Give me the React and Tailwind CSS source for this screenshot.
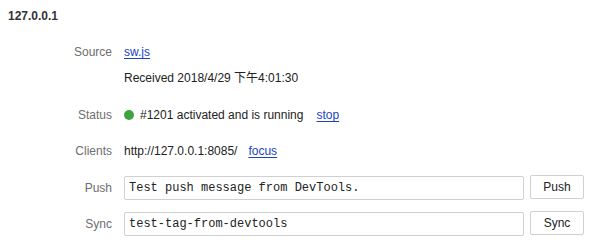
import React from 'react';

const Row = ({ label, children, className = '' }) => (
  <div className={`flex items-center ${className}`}>
    <div className="w-[112px] shrink-0 text-right text-[#6e6e6e]">{label}</div>
    <div className="ml-3 flex items-center">{children}</div>
  </div>
);

const Link = ({ children }) => (
  <a href="#" className="text-[#1a44c2] underline underline-offset-2">{children}</a>
);

const ActionRow = ({ label, value, button, className = '' }) => (
  <Row label={label} className={className}>
    <input
      readOnly
      value={value}
      className="h-[24px] w-[400px] rounded-[2px] border border-[#d0d0d0] bg-white px-[4px] font-['Liberation_Mono',Menlo,monospace] text-[12px] text-[#222] outline-none"
    />
    <button className="ml-[6px] -mt-[2px] h-[24px] w-[54px] rounded-[2px] border border-[#d0d0d0] bg-white text-[12px] text-[#222]">
      {button}
    </button>
  </Row>
);

export default function App() {
  return (
    <div className="h-[242px] w-[601px] bg-white font-['Liberation_Sans','Noto_Sans_CJK_SC',Arial,sans-serif] text-[12px] leading-[16px] text-[#222]">
      <div className="px-[8px] pt-[8px] text-[12px] font-bold leading-[16px] text-[#333]">127.0.0.1</div>

      <Row label="Source" className="mt-[20px]">
        <Link>sw.js</Link>
      </Row>
      <Row label="" className="mt-[10px]">
        <span>Received 2018/4/29 下午4:01:30</span>
      </Row>

      <Row label="Status" className="mt-[21px]">
        <span className="mr-[6px] inline-block h-[10px] w-[10px] rounded-full bg-[#3fa33f]" />
        <span>#1201 activated and is running</span>
        <span className="ml-[13px]"><Link>stop</Link></span>
      </Row>

      <Row label="Clients" className="mt-[20px]">
        <span>http://127.0.0.1:8085/</span>
        <span className="ml-[11px]"><Link>focus</Link></span>
      </Row>

      <ActionRow label="Push" value="Test push message from DevTools." button="Push" className="mt-[17px]" />
      <ActionRow label="Sync" value="test-tag-from-devtools" button="Sync" className="mt-[12px]" />
    </div>
  );
}
